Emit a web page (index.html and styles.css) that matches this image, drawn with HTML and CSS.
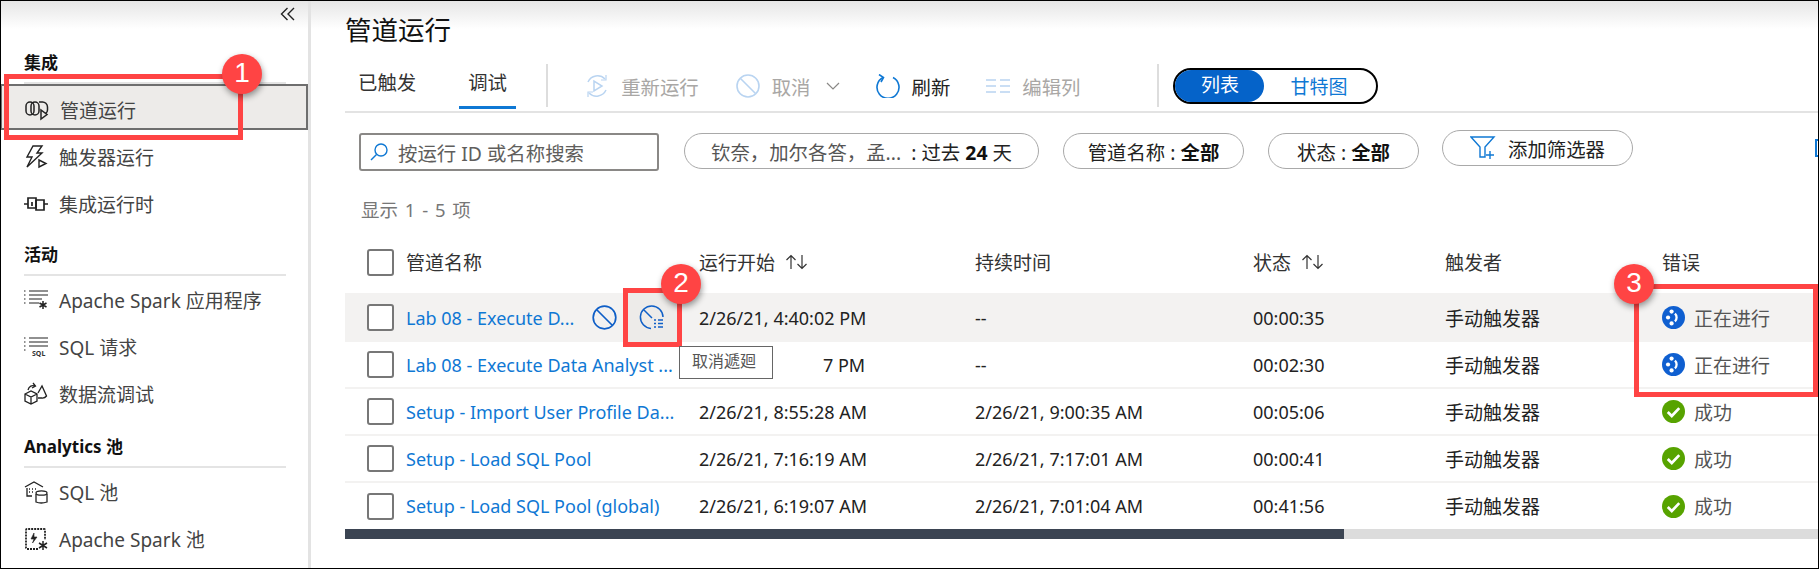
FILE: index.html
```html
<!DOCTYPE html>
<html lang="zh">
<head>
  <meta charset="UTF-8" />
  <title>管道运行</title>
  <link rel="stylesheet" href="styles.css">
</head>
<body>
  <div class="app">
    <aside class="sidebar">
      <div class="collapse">
        <svg width="16" height="14" viewBox="0 0 16 14"><path d="M7.500 1 1.500 7l6 6M14 1 8 7l6 6" fill="none" stroke="#222" stroke-width="1.400"/></svg>
      </div>

      <div class="nav-group nav-group-first">
        <div class="nav-head">集成</div>
        <div class="nav-item selected">
          <svg class="nav-icon" viewBox="0 0 24 20"><g fill="none" stroke="#222" stroke-width="1.500"><rect x="1" y="2" width="8" height="13" rx="4"/><rect x="6" y="2" width="8" height="13" rx="4"/><path d="M14 2h3a5 5 0 0 1 5.500 5v3a4 4 0 0 1-2 3.500"/><path d="M16 10v9l6-4.500z" fill="#edebe9"/></g></svg>
          <span>管道运行</span>
        </div>
        <div class="nav-item">
          <svg class="nav-icon" viewBox="0 0 24 24"><g fill="none" stroke="#222" stroke-width="1.400"><path d="M9 1h9l-5 7h5L3 22l5-10H3z"/><path d="M15 15v7l7-3.500z"/></g></svg>
          <span>触发器运行</span>
        </div>
        <div class="nav-item">
          <svg class="nav-icon" viewBox="0 0 24 16"><g fill="none" stroke="#222" stroke-width="1.700"><path d="M0 8h4M20 8h4"/><path d="M4 8V2h8v10H4z"/><path d="M12 4h8v10h-8V4"/><path d="M8 6v4"/></g></svg>
          <span>集成运行时</span>
        </div>
      </div>

      <div class="nav-group">
        <div class="nav-head">活动</div>
        <div class="nav-item">
          <svg class="nav-icon" viewBox="0 0 24 20"><g fill="none" stroke="#222" stroke-width="1.200"><path d="M0 1h2M0 5h2M0 9h2M0 13h2" stroke-dasharray="1.500 1"/><path d="M5 1h19M5 5h19M5 9h13M5 13h10"/><path d="M19 11v8M15.500 13l7 4M22.500 13l-7 4" stroke-width="1.500"/></g></svg>
          <span>Apache Spark 应用程序</span>
        </div>
        <div class="nav-item">
          <svg class="nav-icon" viewBox="0 0 24 20"><g fill="none" stroke="#222" stroke-width="1.200"><path d="M0 1h2M0 5h2M0 9h2M0 13h2" stroke-dasharray="1.500 1"/><path d="M5 1h19M5 5h19M5 9h19"/></g><text x="8" y="19" class="sql-mark">SQL</text></svg>
          <span>SQL 请求</span>
        </div>
        <div class="nav-item">
          <svg class="nav-icon" viewBox="0 0 24 24"><g fill="none" stroke="#222" stroke-width="1.300"><path d="M1 12l6-3 6 3v7l-6 3-6-3zM1 12l6 3 6-3M7 15v7"/><path d="M14 16h4a5 5 0 0 0 4.500-2L18 4l-4 7"/><path d="M4 8c1-4 4-5 7-4M9 1l2.500 3L8 6"/></g></svg>
          <span>数据流调试</span>
        </div>
      </div>

      <div class="nav-group nav-group-last">
        <div class="nav-head">Analytics 池</div>
        <div class="nav-item">
          <svg class="nav-icon" viewBox="0 0 24 24"><g fill="none" stroke="#222" stroke-width="1.300"><path d="M1 7l9-5 9 5M3 8v8h5"/><path d="M5 9h1M5 12h1M8 9h1M8 12h1M11 9h1" stroke-dasharray="1 1"/><path d="M12 14v8q5 2 11 0v-8"/><ellipse cx="17.500" cy="13" rx="5.500" ry="2.200"/></g></svg>
          <span>SQL 池</span>
        </div>
        <div class="nav-item">
          <svg class="nav-icon" viewBox="0 0 24 24"><g fill="none" stroke="#222" stroke-width="1.300"><path d="M14 22H3a1 1 0 0 1-1-1V3a1 1 0 0 1 1-1h17a1 1 0 0 1 1 1v10" stroke-width="1.800" stroke-dasharray="2 1"/><path d="M10 6 7 12h3l-1.500 4 4.500-6h-3z" fill="#222" stroke-width=".6"/><path d="M19 14v9M15 16l8 5M23 16l-8 5" stroke-width="1.500"/></g></svg>
          <span>Apache Spark 池</span>
        </div>
      </div>
    </aside>

    <main class="main">
      <h1 class="title">管道运行</h1>

      <div class="toolbar">
        <div class="tab">已触发</div>
        <div class="tab tab-active">调试</div>
        <div class="sep"></div>
        <div class="tool disabled tool-rerun">
          <svg width="24" height="24" viewBox="0 0 24 24"><g fill="none" stroke="#b9d4f1" stroke-width="1.500"><path d="M3 8a10.500 10.500 0 0 1 17-3M21 16A10.500 10.500 0 0 1 4 19"/><path d="M21 1v5h-5M3 23v-5h5" stroke-width="1.200"/><path d="M9 7v10l8-5z"/></g></svg>
          <span>重新运行</span>
        </div>
        <div class="tool disabled tool-cancel">
          <svg width="24" height="24" viewBox="0 0 24 24"><g fill="none" stroke="#b9d4f1" stroke-width="1.600"><circle cx="12" cy="12" r="11"/><path d="M4.500 4.500l15 15"/></g></svg>
          <span>取消</span>
          <svg class="chevron" width="14" height="8" viewBox="0 0 14 8"><path d="M1 1l6 6 6-6" fill="none" stroke="#8a8886" stroke-width="1.200"/></svg>
        </div>
        <div class="tool tool-refresh">
          <svg width="24" height="24" viewBox="0 0 24 24"><g fill="none" stroke="#0f78d4" stroke-width="1.600"><path d="M7 3.500a11 11 0 1 0 10 0"/><path d="M3 .5l4.500 3L5 8"/></g></svg>
          <span>刷新</span>
        </div>
        <div class="tool disabled tool-edit">
          <svg width="24" height="14" viewBox="0 0 24 14"><path d="M0 1h10M0 7h10M0 13h10M14 1h10M14 7h10M14 13h10" fill="none" stroke="#b9d4f1" stroke-width="1.300"/></svg>
          <span>编辑列</span>
        </div>
        <div class="sep sep-right"></div>
        <div class="toggle">
          <div class="toggle-on">列表</div>
          <div class="toggle-off">甘特图</div>
        </div>
      </div>

      <div class="filters">
        <div class="search">
          <svg width="18" height="18" viewBox="0 0 18 18"><g fill="none" stroke="#0f78d4" stroke-width="1.400"><circle cx="11" cy="7" r="6"/><path d="M6.500 11.500 1 17"/></g></svg>
          <span>按运行 ID 或名称搜索</span>
        </div>
        <div class="pill pill-time"><span><span class="muted">钦奈，加尔各答，孟...</span> &nbsp;: 过去 <b>24</b> 天</span></div>
        <div class="pill pill-name"><span>管道名称 : <b>全部</b></span></div>
        <div class="pill pill-state"><span>状态 : <b>全部</b></span></div>
        <div class="pill pill-add">
          <svg width="26" height="24" viewBox="0 0 26 24"><g fill="none" stroke="#0f78d4" stroke-width="1.400"><path d="M1 1h23l-9 10v10h-5V11z"/><path d="M20 15v8M16 19h8"/></g></svg>
          <span>添加筛选器</span>
        </div>
        <div class="edge-icon"></div>
      </div>

      <div class="count">显示 1 - 5 项</div>

      <div class="table">
        <div class="row head">
          <div class="check"></div>
          <div>管道名称</div>
          <div class="sort">运行开始 <svg width="24" height="16" viewBox="0 0 24 16"><path d="M6 15V2M1.500 6 6 1.500 10.500 6M17 1v13M12.500 10l4.500 4.500 4.500-4.500" fill="none" stroke="#333" stroke-width="1.200"/></svg></div>
          <div>持续时间</div>
          <div class="sort">状态 <svg width="24" height="16" viewBox="0 0 24 16"><path d="M6 15V2M1.500 6 6 1.500 10.500 6M17 1v13M12.500 10l4.500 4.500 4.500-4.500" fill="none" stroke="#333" stroke-width="1.200"/></svg></div>
          <div>触发者</div>
          <div>错误</div>
        </div>

        <div class="row hover">
          <div class="check"></div>
          <div class="name-cell">
            <a class="link">Lab 08 - Execute D...</a>
            <svg class="row-icon" width="25" height="25" viewBox="0 0 25 25"><g fill="none" stroke="#0f5fc7" stroke-width="1.700"><circle cx="12.500" cy="12.500" r="11.300"/><path d="M4.500 4.500l16 16"/></g></svg>
            <span class="cancel-box">
              <svg width="25" height="25" viewBox="0 0 25 25"><g fill="none" stroke="#0f5fc7" stroke-width="1.500"><path d="M12 23.500A11.300 11.300 0 1 1 24 12"/><path d="M4.500 4.500 13 13"/><path d="M15 15h2M19 15h5M15 18.500h2M19 18.500h5M15 22h2M19 22h5" stroke-width="1.400"/></g></svg>
            </span>
          </div>
          <div>2/26/21, 4:40:02 PM</div>
          <div>--</div>
          <div>00:00:35</div>
          <div class="trigger">手动触发器</div>
          <div class="status">
            <svg class="status-icon" viewBox="0 0 24 24"><circle cx="12" cy="12" r="12" fill="#0f5fd0"/><g fill="#fff"><circle cx="10" cy="5.800" r="2.200"/><circle cx="6.300" cy="12" r="2.200"/><circle cx="10" cy="18.200" r="2.200"/></g><path d="M13.500 8a5.500 5.500 0 0 1 0 8" fill="none" stroke="#fff" stroke-width="2.400"/></svg>
            <span>正在进行</span>
          </div>
        </div>

        <div class="row">
          <div class="check"></div>
          <div><a class="link">Lab 08 - Execute Data Analyst ...</a></div>
          <div class="date-clip">7 PM</div>
          <div>--</div>
          <div>00:02:30</div>
          <div class="trigger">手动触发器</div>
          <div class="status">
            <svg class="status-icon" viewBox="0 0 24 24"><circle cx="12" cy="12" r="12" fill="#0f5fd0"/><g fill="#fff"><circle cx="10" cy="5.800" r="2.200"/><circle cx="6.300" cy="12" r="2.200"/><circle cx="10" cy="18.200" r="2.200"/></g><path d="M13.500 8a5.500 5.500 0 0 1 0 8" fill="none" stroke="#fff" stroke-width="2.400"/></svg>
            <span>正在进行</span>
          </div>
        </div>

        <div class="row">
          <div class="check"></div>
          <div><a class="link">Setup - Import User Profile Da...</a></div>
          <div>2/26/21, 8:55:28 AM</div>
          <div>2/26/21, 9:00:35 AM</div>
          <div>00:05:06</div>
          <div class="trigger">手动触发器</div>
          <div class="status">
            <svg class="status-icon" viewBox="0 0 24 24"><circle cx="12" cy="12" r="12" fill="#57a300"/><path d="M6 12.500l4.200 4.200L18 8.500" fill="none" stroke="#fff" stroke-width="2.800"/></svg>
            <span>成功</span>
          </div>
        </div>

        <div class="row">
          <div class="check"></div>
          <div><a class="link">Setup - Load SQL Pool</a></div>
          <div>2/26/21, 7:16:19 AM</div>
          <div>2/26/21, 7:17:01 AM</div>
          <div>00:00:41</div>
          <div class="trigger">手动触发器</div>
          <div class="status">
            <svg class="status-icon" viewBox="0 0 24 24"><circle cx="12" cy="12" r="12" fill="#57a300"/><path d="M6 12.500l4.200 4.200L18 8.500" fill="none" stroke="#fff" stroke-width="2.800"/></svg>
            <span>成功</span>
          </div>
        </div>

        <div class="row">
          <div class="check"></div>
          <div><a class="link">Setup - Load SQL Pool (global)</a></div>
          <div>2/26/21, 6:19:07 AM</div>
          <div>2/26/21, 7:01:04 AM</div>
          <div>00:41:56</div>
          <div class="trigger">手动触发器</div>
          <div class="status">
            <svg class="status-icon" viewBox="0 0 24 24"><circle cx="12" cy="12" r="12" fill="#57a300"/><path d="M6 12.500l4.200 4.200L18 8.500" fill="none" stroke="#fff" stroke-width="2.800"/></svg>
            <span>成功</span>
          </div>
        </div>
      </div>

      <div class="scrollbar"><div class="scroll-thumb"></div></div>
    </main>

    <!-- callouts drawn on top of the screenshot -->
    <div class="mark mark-1"></div>
    <div class="badge badge-1">1</div>
    <div class="mark mark-2"></div>
    <div class="badge badge-2">2</div>
    <div class="mark mark-3"></div>
    <div class="badge badge-3">3</div>
    <div class="tooltip">取消遞廻</div>
  </div>
</body>
</html>
```

FILE: styles.css
```css
* {
  box-sizing: border-box;
}

body {
  margin: 0;
  background: white;
  font-family: 'Noto Sans', 'Noto Sans CJK SC', sans-serif;
  color: #222;
  overflow: hidden;
}

.app {
  position: relative;
  display: flex;
  width: 1819px;
  height: 569px;
  border: 1px solid black;
  overflow: hidden;
  background: linear-gradient(#e6e6e6, white 28px);
}

/* sidebar */
.sidebar {
  width: 310px;
  flex: none;
  border-right: 3px solid #e3e3e3;
}

.collapse {
  display: flex;
  justify-content: flex-end;
  height: 42px;
  padding: 6px 12px 0 0;
}

.nav-head {
  margin: 0 22px 0 23px;
  height: 41px;
  padding-top: 8px;
  border-bottom: 2px solid #e4e4e4;
  font-size: 17px;
  line-height: 24px;
  font-weight: bold;
  color: #111;
}

.nav-item {
  display: flex;
  align-items: center;
  height: 47px;
  padding-left: 23px;
  font-size: 19px;
  color: #444;
  white-space: nowrap;
}

.nav-group-first .nav-item {
  padding-top: 5px;
}

.nav-group + .nav-group {
  margin-top: 10px;
}

.nav-group + .nav-group-last {
  margin-top: 10px;
}

.selected {
  height: 46px;
  margin-bottom: 1px;
  background: #edebe9;
  border: 2px solid #6e6e6e;
  border-left-width: 1px;
}

.nav-icon {
  width: 24px;
  height: 24px;
  margin-right: 11px;
  flex: none;
}

.sql-mark {
  font-family: 'Noto Sans', sans-serif;
  font-size: 7px;
  font-weight: bold;
  fill: #333;
}

/* main */
.main {
  flex: 1;
  min-width: 0;
  padding-left: 34px;
}

.title {
  margin: 0;
  height: 57px;
  padding-top: 10px;
  font-size: 26.500px;
  line-height: 38px;
  font-weight: normal;
  color: #111;
}

.toolbar {
  display: flex;
  align-items: center;
  height: 55px;
  border-bottom: 2px solid #e3e3e3;
  font-size: 19.400px;
  padding-bottom: 2px;
}

.tab {
  height: 100%;
  margin-left: 13px;
  margin-right: 43px;
  padding-top: 11px;
  line-height: 28px;
  color: #333;
}

.tab-active {
  width: 57px;
  margin-left: 0;
  margin-right: 30px;
  padding: 11px 9px 0;
  border-bottom: 3px solid #0f78d4;
}

.sep {
  width: 2px;
  height: 43px;
  margin-top: 4px;
  background: #ddd;
  flex: none;
}

.tool {
  display: flex;
  align-items: center;
  gap: 12px;
  padding-top: 5px;
  white-space: nowrap;
}

.tool-rerun {
  margin-left: 37px;
}

.tool-cancel {
  margin-left: 37px;
}

.tool-refresh {
  margin-left: 36px;
  color: #222;
}

.tool-edit {
  margin-left: 36px;
}

.disabled {
  color: #a9a7a5;
}

.chevron {
  margin-left: 3px;
}

.sep-right {
  margin-left: 77px;
}

.toggle {
  display: flex;
  align-items: center;
  width: 205px;
  height: 36px;
  margin-left: 14px;
  margin-top: 5px;
  border: 2px solid black;
  border-radius: 18px;
  font-size: 19px;
}

.toggle-on {
  width: 89px;
  height: 32px;
  line-height: 30px;
  text-align: center;
  color: white;
  background: #0563c9;
  border-radius: 16px;
}

.toggle-off {
  margin-left: 26px;
  color: #0f78d4;
}

.filters {
  position: relative;
  display: flex;
  align-items: flex-start;
  height: 85px;
  padding: 20px 0 0 14px;
  font-size: 19.400px;
}

.search {
  display: flex;
  align-items: center;
  gap: 10px;
  flex: none;
  width: 300px;
  height: 38px;
  padding-left: 9px;
  border: 2px solid #8a8886;
  border-radius: 3px;
  color: #605e5c;
}

.pill {
  display: flex;
  align-items: center;
  justify-content: center;
  flex: none;
  height: 36px;
  border: 1.500px solid #a9a9a9;
  border-radius: 18px;
  color: #222;
  white-space: nowrap;
}

.muted {
  color: #555;
}

.pill b {
  color: #111;
}

.pill-time {
  width: 355px;
  margin-left: 25px;
}

.pill-name {
  width: 181px;
  margin-left: 24px;
}

.pill-state {
  width: 151px;
  margin-left: 24px;
}

.pill-add {
  width: 191px;
  margin-left: 23px;
  margin-top: -3px;
  gap: 12px;
}

.edge-icon {
  position: absolute;
  right: -4px;
  top: 26px;
  width: 7px;
  height: 18px;
  border: 2px solid #0f78d4;
}

.count {
  height: 41px;
  padding-left: 16px;
  font-size: 18.500px;
  word-spacing: 2px;
  line-height: 24px;
  color: #777;
}

.row {
  display: grid;
  grid-template-columns: 39px 293px 276px 278px 192px 217px 1fr;
  align-items: center;
  height: 47px;
  padding-left: 22px;
  border-bottom: 2px solid #f3f2f1;
  font-size: 18px;
  color: #222;
  white-space: nowrap;
}

.head {
  height: 54px;
  padding-bottom: 8px;
  border-bottom: none;
  font-size: 19px;
  color: #333;
}

.row:last-child {
  height: 46px;
  border-bottom: none;
}

.hover {
  height: 49px;
  background: #f3f2f1;
  border-bottom: none;
}

.check {
  width: 27px;
  height: 27px;
  border: 2px solid #777;
  border-radius: 3px;
  background: white;
}

.link {
  color: #0f78d4;
}

.name-cell {
  display: flex;
  align-items: center;
  height: 100%;
}

.row-icon {
  position: absolute;
  left: 591px;
}

.cancel-box {
  position: absolute;
  left: 623px;
  top: 292px;
  width: 57px;
  height: 49px;
  padding: 12px 0 0 15px;
  background: #edebe9;
}

.date-clip {
  padding-left: 124px;
}

.sort {
  display: flex;
  align-items: center;
  gap: 10px;
}

.trigger {
  font-size: 19px;
  color: #222;
}

.status {
  display: flex;
  align-items: center;
  gap: 9px;
  font-size: 19px;
  color: #555;
}

.status-icon {
  width: 23px;
  height: 23px;
}

.scrollbar {
  height: 10px;
  background: #dcdcdc;
}

.scroll-thumb {
  width: 999px;
  height: 100%;
  background: #3b4452;
}

/* callouts */
.mark {
  position: absolute;
  border: 5px solid #ff4444;
}

.mark-1 {
  left: 3px;
  top: 73px;
  width: 239px;
  height: 66px;
}

.mark-2 {
  left: 622px;
  top: 287px;
  width: 59px;
  height: 59px;
}

.mark-3 {
  left: 1633px;
  top: 283px;
  width: 184px;
  height: 113px;
}

.badge {
  position: absolute;
  width: 40px;
  height: 40px;
  border-radius: 50%;
  background: #ff4444;
  color: white;
  font-family: 'Liberation Sans', sans-serif;
  font-size: 28px;
  line-height: 38px;
  text-align: center;
  box-shadow: 1px 3px 6px rgba(0, 0, 0, 0.4);
}

.badge-1 {
  left: 221px;
  top: 53px;
}

.badge-2 {
  left: 660px;
  top: 263px;
}

.badge-3 {
  left: 1613px;
  top: 263px;
}

.tooltip {
  position: absolute;
  left: 678px;
  top: 345px;
  width: 94px;
  height: 33px;
  padding-left: 12px;
  background: white;
  border: 1px solid #666;
  font-size: 16px;
  line-height: 29px;
  color: #555;
}
```
